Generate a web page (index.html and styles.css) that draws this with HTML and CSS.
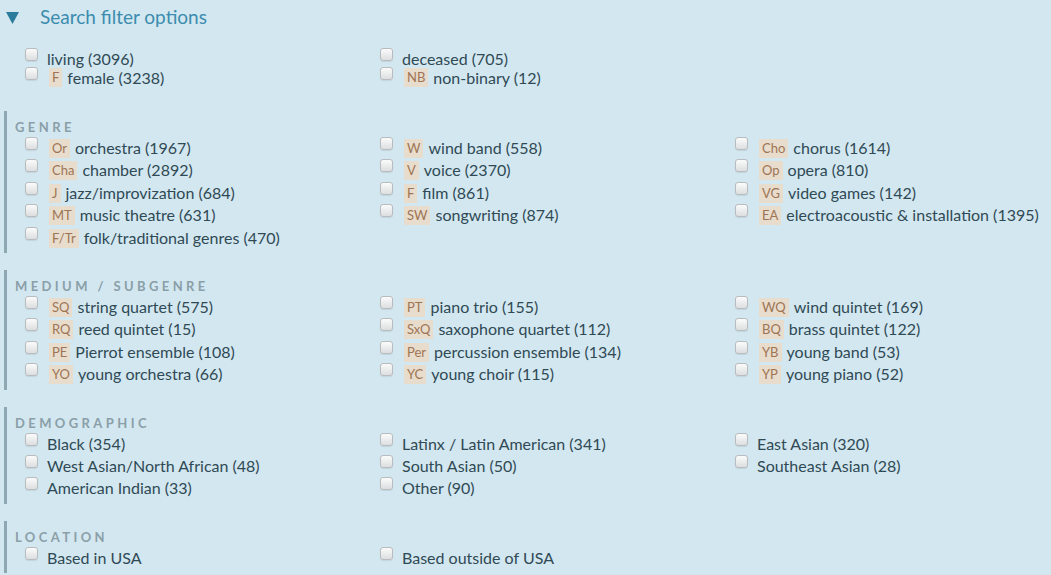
FILE: index.html
```html
<!DOCTYPE html>
<html>
<head>
<meta charset="utf-8">
<link rel="stylesheet" href="styles.css">
</head>
<body>
<div class="header"><svg class="tri" width="13" height="13" viewBox="0 0 13 13"><polygon points="0,1 13,1 6.5,13" fill="#2b7b9c"/></svg><span class="title">Search filter options</span></div>

<div class="basic">
  <div class="grid tight">
    <label class="opt"><input type="checkbox"><span class="txt">living (3096)</span></label>
    <label class="opt"><input type="checkbox"><span class="txt">deceased (705)</span></label>
    <div></div>
    <label class="opt"><input type="checkbox"><span class="badge">F</span><span class="txt">female (3238)</span></label>
    <label class="opt"><input type="checkbox"><span class="badge">NB</span><span class="txt">non-binary (12)</span></label>
  </div>
</div>

<div class="section">
  <div class="label">GENRE</div>
  <div class="grid">
    <label class="opt"><input type="checkbox"><span class="badge">Or</span><span class="txt">orchestra (1967)</span></label>
    <label class="opt"><input type="checkbox"><span class="badge">W</span><span class="txt">wind band (558)</span></label>
    <label class="opt"><input type="checkbox"><span class="badge">Cho</span><span class="txt">chorus (1614)</span></label>
    <label class="opt"><input type="checkbox"><span class="badge">Cha</span><span class="txt">chamber (2892)</span></label>
    <label class="opt"><input type="checkbox"><span class="badge">V</span><span class="txt">voice (2370)</span></label>
    <label class="opt"><input type="checkbox"><span class="badge">Op</span><span class="txt">opera (810)</span></label>
    <label class="opt"><input type="checkbox"><span class="badge">J</span><span class="txt">jazz/improvization (684)</span></label>
    <label class="opt"><input type="checkbox"><span class="badge">F</span><span class="txt">film (861)</span></label>
    <label class="opt"><input type="checkbox"><span class="badge">VG</span><span class="txt">video games (142)</span></label>
    <label class="opt"><input type="checkbox"><span class="badge">MT</span><span class="txt">music theatre (631)</span></label>
    <label class="opt"><input type="checkbox"><span class="badge">SW</span><span class="txt">songwriting (874)</span></label>
    <label class="opt"><input type="checkbox"><span class="badge">EA</span><span class="txt">electroacoustic &amp; installation (1395)</span></label>
    <label class="opt"><input type="checkbox"><span class="badge">F/Tr</span><span class="txt">folk/traditional genres (470)</span></label>
  </div>
</div>

<div class="section">
  <div class="label">MEDIUM / SUBGENRE</div>
  <div class="grid">
    <label class="opt"><input type="checkbox"><span class="badge">SQ</span><span class="txt">string quartet (575)</span></label>
    <label class="opt"><input type="checkbox"><span class="badge">PT</span><span class="txt">piano trio (155)</span></label>
    <label class="opt"><input type="checkbox"><span class="badge">WQ</span><span class="txt">wind quintet (169)</span></label>
    <label class="opt"><input type="checkbox"><span class="badge">RQ</span><span class="txt">reed quintet (15)</span></label>
    <label class="opt"><input type="checkbox"><span class="badge">SxQ</span><span class="txt">saxophone quartet (112)</span></label>
    <label class="opt"><input type="checkbox"><span class="badge">BQ</span><span class="txt">brass quintet (122)</span></label>
    <label class="opt"><input type="checkbox"><span class="badge">PE</span><span class="txt">Pierrot ensemble (108)</span></label>
    <label class="opt"><input type="checkbox"><span class="badge">Per</span><span class="txt">percussion ensemble (134)</span></label>
    <label class="opt"><input type="checkbox"><span class="badge">YB</span><span class="txt">young band (53)</span></label>
    <label class="opt"><input type="checkbox"><span class="badge">YO</span><span class="txt">young orchestra (66)</span></label>
    <label class="opt"><input type="checkbox"><span class="badge">YC</span><span class="txt">young choir (115)</span></label>
    <label class="opt"><input type="checkbox"><span class="badge">YP</span><span class="txt">young piano (52)</span></label>
  </div>
</div>

<div class="section">
  <div class="label">DEMOGRAPHIC</div>
  <div class="grid">
    <label class="opt"><input type="checkbox"><span class="txt">Black (354)</span></label>
    <label class="opt"><input type="checkbox"><span class="txt">Latinx / Latin American (341)</span></label>
    <label class="opt"><input type="checkbox"><span class="txt">East Asian (320)</span></label>
    <label class="opt"><input type="checkbox"><span class="txt">West Asian/North African (48)</span></label>
    <label class="opt"><input type="checkbox"><span class="txt">South Asian (50)</span></label>
    <label class="opt"><input type="checkbox"><span class="txt">Southeast Asian (28)</span></label>
    <label class="opt"><input type="checkbox"><span class="txt">American Indian (33)</span></label>
    <label class="opt"><input type="checkbox"><span class="txt">Other (90)</span></label>
  </div>
</div>

<div class="section">
  <div class="label">LOCATION</div>
  <div class="grid">
    <label class="opt"><input type="checkbox"><span class="txt">Based in USA</span></label>
    <label class="opt"><input type="checkbox"><span class="txt">Based outside of USA</span></label>
  </div>
</div>
</body>
</html>
```
FILE: styles.css
```css
html, body {
  margin: 0;
  padding: 0;
  background: #d3e7f0;
}
body {
  font-family: Lato, "Open Sans", sans-serif;
  color: #2f4a55;
  font-size: 16px;
  overflow: hidden;
  height: 575px;
}
.header {
  display: flex;
  align-items: center;
  height: 26px;
  padding: 4px 0 0 6px;
}
.tri {
  flex: none;
  margin-right: 21px;
}
.title {
  color: #3b8cae;
  font-size: 19px;
  line-height: 26px;
}
.basic {
  margin-top: 19px;
  padding-left: 25px;
  margin-bottom: 24px;
}
.grid {
  display: grid;
  grid-template-columns: 355px 355px 1fr;
}
.opt {
  display: flex;
  align-items: flex-start;
  line-height: 22.4px;
  white-space: nowrap;
}
.tight .opt {
  line-height: 19px;
}
.opt input {
  -webkit-appearance: none;
  appearance: none;
  margin: 0 9px 0 0;
  width: 13px;
  height: 13px;
  flex: none;
  border: 1px solid #b9bcbe;
  border-radius: 3px;
  background: linear-gradient(#fbfbfb, #dcdedf);
  box-shadow: 0 1px 1px rgba(0, 0, 0, 0.08);
}
.tight .opt input {
  margin-top: -1px;
}
.badge {
  display: inline-block;
  margin: 2px 5px 0 2px;
  padding: 0 3px;
  height: 19px;
  line-height: 19px;
  font-size: 13px;
  background: #e8dccd;
  color: #9e7554;
  align-self: flex-start;
}
.tight .badge {
  margin-top: 0;
  margin-bottom: 0;
}
.section {
  margin-left: 4px;
  border-left: 3px solid #8ea8b3;
  padding: 8px 0 4px 8px;
  margin-bottom: 17px;
}
.label {
  font-size: 13px;
  line-height: 16px;
  letter-spacing: 3.4px;
  color: #8a9fa8;
  font-weight: bold;
}
.section .grid {
  margin-top: 2px;
  padding-left: 10px;
}
```
